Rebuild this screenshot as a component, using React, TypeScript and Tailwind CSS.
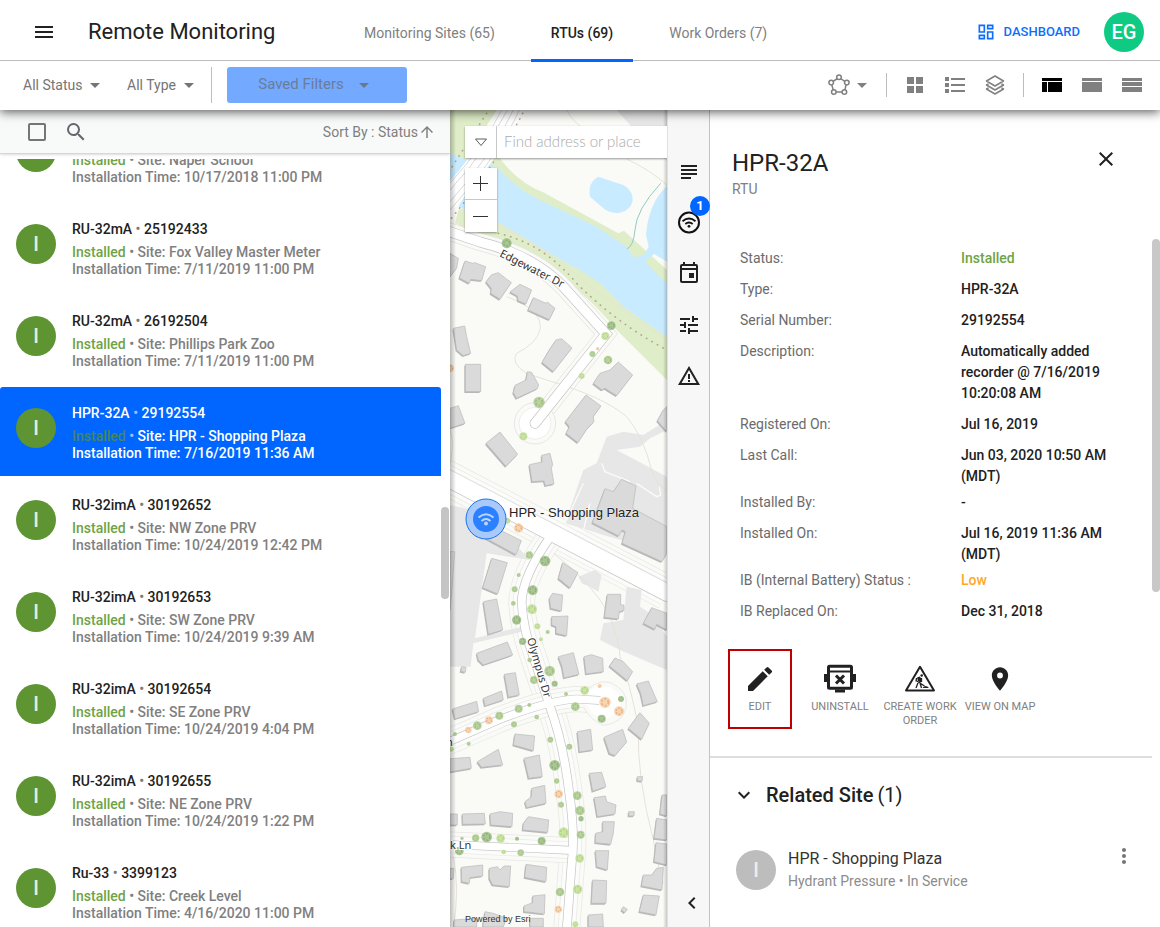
import React, { useState } from "react";
import clsx from "clsx";
import {
  MdArrowDropDown,
  MdArrowUpward,
  MdChevronLeft,
  MdClose,
  MdEdit,
  MdExpandMore,
  MdMenu,
  MdMoreVert,
  MdOutlineDashboard,
  MdPlace,
  MdSearch,
  MdSubject,
  MdTune,
  MdWarningAmber,
} from "react-icons/md";

const tabs = ["Monitoring Sites (65)", "RTUs (69)", "Work Orders (7)"];

const rtus = [
  { model: "RU-32mA", serial: "24192811", site: "Naper School", time: "10/17/2018 11:00 PM" },
  { model: "RU-32mA", serial: "25192433", site: "Fox Valley Master Meter", time: "7/11/2019 11:00 PM" },
  { model: "RU-32mA", serial: "26192504", site: "Phillips Park Zoo", time: "7/11/2019 11:00 PM" },
  { model: "HPR-32A", serial: "29192554", site: "HPR - Shopping Plaza", time: "7/16/2019 11:36 AM" },
  { model: "RU-32imA", serial: "30192652", site: "NW Zone PRV", time: "10/24/2019 12:42 PM" },
  { model: "RU-32imA", serial: "30192653", site: "SW Zone PRV", time: "10/24/2019 9:39 AM" },
  { model: "RU-32imA", serial: "30192654", site: "SE Zone PRV", time: "10/24/2019 4:04 PM" },
  { model: "RU-32imA", serial: "30192655", site: "NE Zone PRV", time: "10/24/2019 1:22 PM" },
  { model: "Ru-33", serial: "3399123", site: "Creek Level", time: "4/16/2020 11:00 PM" },
];

const details = [
  { label: "Status:", value: "Installed", color: "text-[#6fa345]" },
  { label: "Type:", value: "HPR-32A" },
  { label: "Serial Number:", value: "29192554" },
  { label: "Description:", value: "Automatically added recorder @ 7/16/2019 10:20:08 AM" },
  { label: "Registered On:", value: "Jul 16, 2019" },
  { label: "Last Call:", value: "Jun 03, 2020 10:50 AM (MDT)", tight: true },
  { label: "Installed By:", value: "-" },
  { label: "Installed On:", value: "Jul 16, 2019 11:36 AM (MDT)", tight: true },
  { label: "IB (Internal Battery) Status :", value: "Low", color: "text-[#ffa726]" },
  { label: "IB Replaced On:", value: "Dec 31, 2018" },
];

export default function App() {
  return (
    <div className="flex h-screen flex-col overflow-hidden bg-white font-['Roboto',sans-serif] text-sm text-[#212121]">
      <Header />
      <Toolbar />
      <main className="grid min-h-0 flex-1 grid-cols-[minmax(0,450fr)_minmax(0,217fr)_43px_minmax(0,450fr)]">
        <RtuList />
        <SiteMap />
        <Rail />
        <DetailsPanel />
      </main>
    </div>
  );
}

function Header() {
  return (
    <header className="relative z-30 flex h-[61px] shrink-0 border-b border-[#bdbdbd] bg-white">
      <div className="flex w-[344px] shrink-0 items-center pl-8 pt-1">
        <button type="button" aria-label="Menu">
          <MdMenu className="size-6" />
        </button>
        <h1 className="ml-8 text-[22px] font-normal">Remote Monitoring</h1>
      </div>
      <nav className="flex gap-4">
        {tabs.map((tab, i) => (
          <a
            key={tab}
            href="#"
            className={clsx(
              "relative flex items-center whitespace-nowrap px-5 pt-1.5 text-sm",
              i === 1 ? "font-medium text-[#212121]" : "text-[#808080]"
            )}
          >
            {tab}
            {i === 1 && <span className="absolute inset-x-0 top-[59px] h-[3px] bg-[#0066ff]" />}
          </a>
        ))}
      </nav>
      <div className="ml-auto flex items-center gap-6 pr-4 pt-1">
        <a href="#" className="flex items-center gap-2 text-[13px] font-medium text-[#0d6efd]">
          <MdOutlineDashboard className="size-5" />
          DASHBOARD
        </a>
        <button type="button" className="size-10 rounded-full bg-[#0fca83] text-xl font-medium text-white">
          EG
        </button>
      </div>
    </header>
  );
}

function FilterSelect({ label }: { label: string }) {
  return (
    <div className="flex items-center">
      <select aria-label={label} className="appearance-none bg-transparent text-sm text-[#757575]">
        <option>{label}</option>
      </select>
      <MdArrowDropDown className="pointer-events-none size-6 text-[#757575]" />
    </div>
  );
}

function Toolbar() {
  return (
    <div className="relative z-20 flex h-[49px] shrink-0 items-center bg-white pb-0.5 pl-[23px] pr-2 shadow-[0_2px_10px_rgba(0,0,0,0.65)]">
      <div className="flex items-center gap-5">
        <FilterSelect label="All Status" />
        <FilterSelect label="All Type" />
      </div>
      <div className="ml-2.5 mr-[15px] h-9 w-px bg-[#bdbdbd]" />
      <button
        type="button"
        disabled
        className="flex h-9 w-[180px] items-center justify-center gap-2 rounded-[3px] bg-[#73a9ff] text-[15px] text-[#6b7d99]"
      >
        Saved Filters
        <MdArrowDropDown className="size-6 text-[#6b7886]" />
      </button>

      <div className="ml-auto flex items-center text-[#808080]">
        <button type="button" aria-label="Select by shape" className="flex items-center pr-1">
          <svg className="size-[22px]" viewBox="0 0 22 22" fill="white" stroke="currentColor" strokeWidth="1.5">
            <path d="M11 3.5 18.6 8.6 16.4 18H5.8L3.2 8.6Z" />
            <circle cx="11" cy="3.2" r="2.3" />
            <circle cx="18.8" cy="8.6" r="2.3" />
            <circle cx="16.4" cy="18" r="2.3" />
            <circle cx="5.8" cy="18" r="2.3" />
            <circle cx="3.2" cy="8.6" r="2.3" />
          </svg>
          <MdArrowDropDown className="size-6" />
        </button>
        <div className="mx-2 h-6 w-px bg-[#bdbdbd]" />
        <ToolButton label="Grid">
          <svg className="h-4 w-4" viewBox="0 0 16 16" fill="currentColor">
            <path d="M0 0h7v7H0zM9 0h7v7H9zM0 9h7v7H0zM9 9h7v7H9z" />
          </svg>
        </ToolButton>
        <ToolButton label="List">
          <svg className="h-4 w-5" viewBox="0 0 20 16" fill="currentColor">
            <path d="M0 0h4v4H0zM0 6h4v4H0zM0 12h4v4H0zM6 1h14v2H6zM6 7h14v2H6zM6 13h14v2H6z" />
          </svg>
        </ToolButton>
        <ToolButton label="Layers">
          <svg className="size-5" viewBox="0 0 20 20" fill="none" stroke="currentColor" strokeWidth="1.5" strokeLinejoin="round">
            <path d="M10 1 18.5 6 10 11 1.5 6ZM3.5 8.8 1.5 10 10 15 18.5 10 16.5 8.8M3.5 12.8 1.5 14 10 19 18.5 14 16.5 12.8" />
          </svg>
        </ToolButton>
        <div className="mx-2 h-6 w-px bg-[#bdbdbd]" />
        <ToolButton label="Split view" active>
          <svg className="h-3.5 w-5" viewBox="0 0 20 14" fill="currentColor">
            <path d="M0 0h20v3H0zM0 4h5v10H0zM6 4h14v10H6z" />
          </svg>
        </ToolButton>
        <ToolButton label="Map view">
          <svg className="h-3.5 w-5" viewBox="0 0 20 14" fill="currentColor">
            <path d="M0 0h20v3H0zM0 4h20v10H0z" />
          </svg>
        </ToolButton>
        <ToolButton label="Table view">
          <svg className="h-3.5 w-5" viewBox="0 0 20 14" fill="currentColor">
            <path d="M0 0h20v3H0zM0 4h20v4H0zM0 9h20v5H0z" />
          </svg>
        </ToolButton>
      </div>
    </div>
  );
}

function ToolButton({ label, active, children }: { label: string; active?: boolean; children: React.ReactNode }) {
  return (
    <button
      type="button"
      aria-label={label}
      className={clsx("flex size-10 items-center justify-center", active && "text-black")}
    >
      {children}
    </button>
  );
}

function RtuList() {
  const [selected, setSelected] = useState("29192554");

  return (
    <section className="flex min-h-0 flex-col">
      <div className="flex h-11 shrink-0 items-center border-b border-[#d5d8d8] bg-[#f8faf9] pl-7 pr-3.5 text-[#757575] shadow-sm">
        <input
          type="checkbox"
          aria-label="Select all"
          className="size-[18px] appearance-none rounded-[2px] border-2 border-[#757575]"
        />
        <button type="button" aria-label="Search" className="ml-[18px] text-[#66666e]">
          <MdSearch className="size-6" />
        </button>
        <button type="button" className="ml-auto flex items-center text-[#808080]">
          Sort By : Status
          <MdArrowUpward className="size-[18px]" />
        </button>
      </div>
      <div className="mt-[5px] flex min-h-0 flex-1 pr-px">
        <ul className="min-w-0 flex-1 overflow-hidden">
          {rtus.map((rtu) => (
            <RtuRow
              key={rtu.serial}
              rtu={rtu}
              active={rtu.serial === selected}
              onSelect={() => setSelected(rtu.serial)}
            />
          ))}
        </ul>
        <div className="mt-[348px] h-[92px] w-2 rounded-full bg-[#c4c4c4]" />
      </div>
    </section>
  );
}

function RtuRow({
  rtu,
  active,
  onSelect,
}: {
  rtu: { model: string; serial: string; site: string; time: string };
  active: boolean;
  onSelect: () => void;
}) {
  return (
    <li className="mb-[3px] first:-mt-12">
      <button
        type="button"
        onClick={onSelect}
        className={clsx(
          "flex h-[89px] w-full items-start rounded-t-[3px] px-4 pt-4 text-left font-medium",
          active ? "bg-[#0066ff] text-white" : "text-[#808080]"
        )}
      >
        <span className="mt-[5px] flex size-10 shrink-0 items-center justify-center rounded-full bg-[#5e9432] text-xl text-[#e4efdc]">
          I
        </span>
        <span className="ml-4">
          <span className={clsx("mb-[5px] block leading-5", active ? "text-white" : "text-[#212121]")}>
            {rtu.model} <span className="opacity-60">•</span> {rtu.serial}
          </span>
          <span className="block leading-[17px]">
            <span className={active ? "text-[#44875f]" : "text-[#6fa345]"}>Installed</span>{" "}
            <span className={clsx(active && "opacity-60")}>•</span> Site: {rtu.site}
          </span>
          <span className="block leading-[17px]">Installation Time: {rtu.time}</span>
        </span>
      </button>
    </li>
  );
}

// Base map shapes, three units to a screen pixel
const parking = [
  "500,0 651,0 651,50 545,50",
  "345,1240 400,1080 440,1060 470,980 520,965 580,975 651,930 651,960 600,985 570,1010 500,1020 651,1100 651,1330 460,1275 420,1262",
  "0,1185 110,1210 240,1350 110,1330 75,1585 215,1550 215,1565 70,1600 62,1670 0,1670",
  "385,1400 435,1380 455,1395 445,1445 420,1430 395,1420",
  "530,1430 575,1440 570,1490 600,1510 651,1580 651,1680 510,1620 450,1590 460,1540 520,1530",
];

const buildings = [
  // around Edgewater Dr
  "0,430 25,445 20,475 0,500",
  "45,453 68,460 74,458 107,470 95,512 62,508 58,520 28,504",
  "125,494 145,488 184,518 150,568 122,550 124,535 108,515",
  "210,523 245,540 228,582 204,572 202,558 180,546",
  "250,563 288,580 292,576 315,595 298,629 234,600",
  "10,655 44,648 50,680 62,730 40,737 20,720",
  "46,763 92,763 92,845 46,845",
  "318,690 335,686 366,714 310,785 276,757 300,716",
  "232,785 245,787 266,825 262,836 200,865 190,848 195,826 228,810",
  "505,756 548,795 500,857 465,835 456,840 430,820 450,790 480,780",
  "0,895 25,887 45,940 0,955",
  "408,855 453,888 430,920 432,935 410,958 384,998 348,970 358,950 346,935",
  "150,966 203,1033 168,1069 108,1000",
  "275,1036 300,1030 308,1064 304,1075 312,1122 286,1127 282,1113 246,1115 238,1064 276,1056",
  "640,900 651,890 651,965 622,932",
  // plaza
  "515,1108 558,1128 548,1195 651,1250 651,1330 636,1355 516,1300 526,1265 516,1260 506,1278 427,1238 465,1136 490,1145",
  // along the main road
  "118,1250 160,1265 214,1292 198,1334 108,1285",
  "125,1345 172,1358 143,1452 98,1433",
  "100,1475 140,1467 158,1560 115,1573",
  "80,1630 172,1596 188,1635 100,1665 85,1650",
  "0,1325 14,1325 5,1450 0,1500",
  "338,1358 384,1388 360,1434 325,1405",
  "308,1450 338,1455 334,1503 302,1495 298,1465",
  "305,1520 354,1518 350,1577 318,1570 318,1550 305,1545",
  "472,1453 512,1453 512,1485 522,1485 522,1502 508,1505 505,1527 463,1522",
  "605,1493 651,1510 651,1560 620,1543 615,1558 580,1540",
  // around Olympus Dr
  "325,1640 370,1628 387,1693 342,1704 336,1670",
  "402,1640 425,1634 458,1645 460,1685 408,1692",
  "495,1644 520,1655 548,1685 532,1712 478,1668",
  "163,1693 196,1688 208,1755 175,1762",
  "100,1765 155,1743 160,1770 105,1788",
  "8,1797 80,1774 86,1805 15,1827",
  "560,1722 595,1713 622,1775 580,1787 572,1750",
  "570,1808 598,1840 575,1888 535,1855",
  "195,1872 254,1878 250,1922 190,1905",
  "82,1955 145,1918 158,1965 95,1972",
  "0,1946 60,1942 64,1975 0,1986",
  "222,1945 268,1935 277,2000 236,2005",
  "382,1865 422,1858 428,1920 388,1926",
  "462,1882 518,1858 530,1896 495,1937 478,1930",
  "245,2035 284,2026 288,2080 230,2093 225,2075 244,2060",
  "37,2112 103,2110 106,2142 38,2143",
  "120,2112 150,2105 188,2110 186,2150 122,2145",
  "0,2112 22,2112 22,2145 0,2145",
  "235,2120 296,2130 293,2167 218,2160 220,2140",
  "418,1990 455,1987 468,2030 428,2044",
  "432,2063 466,2058 470,2075 498,2085 495,2112 442,2120",
  "458,2135 493,2135 490,2170 482,2203 436,2198 437,2170 458,2165",
  "436,2222 476,2222 472,2280 440,2270",
  "428,2310 470,2312 468,2380 424,2380",
  "34,2272 98,2265 98,2298 60,2303 58,2320 35,2315",
  "118,2275 142,2270 150,2280 162,2268 182,2268 178,2330 128,2325 118,2305",
  "0,2275 12,2275 10,2306 0,2306",
  "228,2263 290,2272 288,2315 224,2302",
  "248,2358 285,2354 283,2412 222,2405 222,2388 248,2378",
  "620,2275 640,2272 636,2340 574,2328 580,2295 605,2295",
  "580,2355 628,2358 618,2415 568,2405",
  "618,2198 651,2202 651,2265 612,2255",
  "620,2125 651,2130 651,2190 612,2185",
  "636,2055 651,2055 651,2118 630,2112",
  "415,2415 458,2412 460,2451 415,2451",
  "105,2405 130,2410 170,2425 160,2451 98,2451",
  "240,2425 280,2425 280,2451 240,2451",
  "12,2430 80,2425 80,2451 12,2451",
  "35,1670 48,1672 46,1687 32,1684",
  "562,2000 578,2000 576,2014 562,2012",
  "536,2105 553,2105 552,2118 536,2118",
  "520,2390 532,2398 524,2408 514,2400",
];

// [x, y, radius, kind]
const trees: [number, number, number, string][] = [
  [170, 400, 15, "dark"], [484, 647, 13, "dark"], [466, 678, 12, "light"], [427, 732, 9, "mid"],
  [474, 750, 13, "mid"], [395, 798, 9, "light"], [443, 716, 5, "orange"], [0, 775, 12, "orange"],
  [267, 877, 17, "mid"], [220, 979, 12, "light"], [172, 1232, 9, "light"], [206, 1254, 14, "orange"],
  [238, 1335, 11, "mid"], [285, 1353, 16, "dark"], [206, 1395, 6, "mid"], [194, 1438, 9, "mid"],
  [248, 1441, 15, "dark"], [190, 1480, 7, "mid"], [246, 1498, 15, "light"], [200, 1530, 14, "dark"],
  [262, 1549, 9, "light"], [293, 1566, 6, "mid"], [218, 1594, 11, "dark"], [273, 1588, 6, "light"],
  [239, 1650, 7, "mid"], [299, 1683, 16, "mid"], [252, 1710, 12, "mid"], [314, 1721, 9, "dark"],
  [348, 1752, 6, "mid"], [404, 1741, 13, "light"], [449, 1728, 6, "orange"], [376, 1790, 13, "mid"],
  [465, 1777, 17, "orange"], [507, 1804, 15, "orange"], [513, 1767, 9, "dark"], [455, 1826, 12, "dark"],
  [206, 1796, 12, "mid"], [238, 1785, 6, "mid"], [260, 1821, 7, "mid"], [148, 1817, 12, "mid"],
  [117, 1831, 12, "orange"], [82, 1847, 13, "mid"], [55, 1860, 10, "orange"], [192, 1843, 9, "mid"],
  [15, 1872, 6, "mid"], [56, 1901, 6, "mid"], [5, 1918, 7, "light"], [301, 1889, 9, "mid"],
  [358, 1910, 9, "mid"], [314, 1966, 16, "dark"], [320, 2013, 8, "mid"], [326, 2052, 13, "orange"],
  [382, 2057, 13, "mid"], [333, 2084, 9, "mid"], [390, 2102, 14, "mid"], [393, 2126, 8, "dark"],
  [341, 2168, 16, "light"], [392, 2174, 12, "mid"], [77, 2184, 11, "mid"], [110, 2181, 16, "dark"],
  [152, 2185, 13, "light"], [201, 2186, 6, "dark"], [275, 2193, 12, "dark"], [36, 2185, 5, "mid"],
  [28, 2223, 13, "dark"], [161, 2226, 7, "light"], [212, 2228, 10, "mid"], [389, 2245, 13, "light"],
  [383, 2338, 14, "light"], [330, 2346, 13, "mid"], [325, 2398, 11, "orange"], [376, 2443, 9, "light"],
];

const roads = [
  { d: "M-10 362 90 396Q250 436 340 530L468 672L255 940", width: 28 },
  { d: "M-20 1098 651 1448", width: 50 },
  { d: "M305 1275 Q215 1400 215 1480 Q220 1560 250 1640 L300 1790 Q340 1900 358 2050 Q376 2180 365 2260L350 2460", width: 24 },
  { d: "M-10 1898 150 1828 Q300 1770 380 1767 L460 1772", width: 22 },
  { d: "M-10 2203 365 2221", width: 22 },
];

function SiteMap() {
  return (
    <section className="relative min-w-0 overflow-hidden bg-[#fafbf7]">
      <svg className="absolute inset-0 size-full" viewBox="0 0 217 817" preserveAspectRatio="xMinYMin slice">
        <g transform="scale(0.33333)">
          <path
            d="M0 0H140L40 155 0 130ZM120 130 150 145Q200 215 285 250L505 370 522 362 651 480V810L500 660Q400 540 300 480 180 400 100 385L15 340 25 300 80 280Z"
            fill="#dfedc8"
          />
          <path
            d="M0 130 50 150 0 235ZM105 155 145 175Q200 240 290 280L440 350 480 378 530 410 550 442 580 437 596 410 588 375Q595 280 651 228V455L612 432 585 455 651 520V680L520 590 450 520 390 480 300 430 210 375 150 340 25 290 60 230Z"
            fill="#c9ebff"
          />
          <path d="M445 200 520 225Q550 242 548 272 543 300 510 308 480 312 460 295L420 260Q412 218 445 200Z" fill="#c9ebff" />
          <path d="M632 220Q558 300 555 360 550 410 530 417" fill="none" stroke="#8fcbc2" strokeWidth="3" />
          {roads.slice(1).map((road) => (
            <g key={road.d} fill="none">
              <path d={road.d} stroke="#e6e6e4" strokeWidth={road.width + 56} />
              <path d={road.d} stroke="#fafbf7" strokeWidth={road.width + 52} />
              <path d={road.d} stroke="#e8e8e6" strokeWidth={road.width + 30} />
              <path d={road.d} stroke="#fcfcfa" strokeWidth={road.width + 26} />
            </g>
          ))}
          <path d={roads[0].d} fill="none" stroke="#e4e4e2" strokeWidth="54" />
          <path d={roads[0].d} fill="none" stroke="#fafbf7" strokeWidth="50" />
          {parking.map((points) => (
            <polygon key={points} points={points} fill="#e7e7e7" />
          ))}
          <g fill="none" stroke="#e6e2d8" strokeWidth="3">
            <path d="M145 345Q300 420 420 530L651 690M350 0Q370 40 410 60M530 147Q600 180 651 225" />
            <path d="M170 560Q280 600 270 660 260 700 200 730 180 760 230 790L290 810Q460 860 530 920 580 980 605 1080 620 1130 651 1140" />
            <path d="M310 1330Q430 1420 480 1520 510 1600 510 1640 540 1720 565 1850 560 2000 610 2190 630 2300 640 2320M0 960Q15 1000 0 1060M10 2240Q30 2340 10 2451" />
          </g>
          <path d="M455 1060 465 1085 540 1115M560 1120 620 1160 632 1155 628 1130M345 1240 400 1120M400 1262 420 1180" fill="none" stroke="#fafbf7" strokeWidth="4" />
          <path d="M190-10Q140 100-10 275" fill="none" stroke="#ffffff" strokeWidth="62" />
          <path
            d="M155 0Q100 110 0 220M172 0Q110 120 0 240M190 0Q130 130 0 275M208 0Q150 130 0 300"
            fill="none"
            stroke="#c6c6c6"
            strokeWidth="2"
          />
          <path
            d="M110 10 0 180M218 10Q140 160 0 330M145 370Q280 400 380 520 500 640 651 720"
            fill="none"
            stroke="#b5a58e"
            strokeWidth="5"
            strokeDasharray="1 18"
            strokeLinecap="round"
          />
          <circle cx="255" cy="940" r="62" fill="#fafbf7" stroke="#dddddd" strokeWidth="2" />
          <circle cx="255" cy="940" r="48" fill="#ffffff" stroke="#e6e6e6" strokeWidth="2" />
          <path d="M390 1767Q430 1705 480 1717 535 1740 529 1790 520 1840 460 1846 420 1830 400 1790" fill="#fafbf7" stroke="#e0e0e0" strokeWidth="2" />
          <path d="M390 1767Q430 1720 480 1732 515 1750 512 1785 500 1820 460 1826 430 1820 410 1785" fill="#ffffff" />
          {roads.map((road) => (
            <path key={road.d} d={road.d} fill="none" stroke="#c4c4c4" strokeWidth={road.width + 4} strokeLinecap="round" />
          ))}
          {roads.map((road) => (
            <path key={road.d} d={road.d} fill="none" stroke="#ffffff" strokeWidth={road.width} strokeLinecap="round" />
          ))}
          <circle cx="472" cy="1775" r="26" fill="#ffffff" />
          <path d="M0 1078 651 1417" stroke="#ececec" strokeWidth="3" />
          {buildings.map((points) => (
            <g key={points}>
              <polygon points={points} fill="#b8b8b8" transform="translate(-3 4)" />
              <polygon points={points} fill="#dadada" stroke="#b8b8b8" strokeWidth="2" />
            </g>
          ))}
          {trees.map(([x, y, r, kind]) => (
            <Tree key={`${x}-${y}`} x={x} y={y} r={r} kind={kind} />
          ))}
        </g>
        <g fontFamily="'Noto Sans', sans-serif" fontSize="11" fill="#333333" stroke="#ffffff" strokeWidth="2" paintOrder="stroke">
          <text x="49" y="146" transform="rotate(27 49 146)">Edgewater Dr</text>
          <text x="77" y="529" transform="rotate(74 77 529)">Olympus Dr</text>
          <text x="0" y="739">k Ln</text>
          <text x="-4" y="636">n</text>
        </g>
        <g transform="translate(36 409)">
          <circle r="20" fill="#a9c9fb" stroke="#1a73f0" />
          <circle r="13" fill="#2a80ff" />
          <g fill="none" stroke="#bcd6fb" strokeWidth="2">
            <path d="M-7.5-1.5Q0-8 7.5-1.5M-4.5 2Q0-2 4.5 2" />
            <circle cy="4.500" r="1" fill="#bcd6fb" />
          </g>
        </g>
        <text
          x="59"
          y="407"
          fontFamily="'Liberation Sans', sans-serif"
          fontSize="13"
          fill="#222222"
          stroke="#ffffff"
          strokeOpacity="0.5"
          strokeWidth="1"
          paintOrder="stroke"
        >
          HPR - Shopping Plaza
        </text>
      </svg>
      <div className="pointer-events-none absolute inset-y-0 left-0 w-1.5 bg-gradient-to-r from-black/25 to-transparent" />
      <div className="pointer-events-none absolute inset-y-0 right-0 w-1 bg-gradient-to-l from-black/20 to-transparent" />

      <div className="absolute left-[15px] right-0 top-4 flex h-8 bg-white shadow-[0_1px_2px_rgba(0,0,0,0.4)]">
        <button
          type="button"
          aria-label="Search source"
          className="flex w-8 shrink-0 items-center justify-center border-r border-[#c8c8c8]"
        >
          <svg className="h-2 w-3" viewBox="0 0 12 8" fill="none" stroke="#5c5c5c">
            <path d="M.5 1h11L6 7.500Z" />
          </svg>
        </button>
        <input
          type="text"
          aria-label="Find address or place"
          placeholder="Find address or place"
          className="min-w-0 flex-1 px-[7px] font-['Lato',sans-serif] text-[15px] font-light placeholder:text-[#a9a9a9]"
        />
      </div>
      <div className="absolute left-[15px] top-[58px] flex w-8 flex-col divide-y divide-[#c8c8c8] bg-white shadow-[0_1px_2px_rgba(0,0,0,0.4)]">
        <button type="button" aria-label="Zoom in" className="flex h-8 items-center justify-center">
          <svg className="size-4" viewBox="0 0 16 16" stroke="#323232">
            <path d="M7.5 0v15M0 7.5h15" />
          </svg>
        </button>
        <button type="button" aria-label="Zoom out" className="flex h-8 items-center justify-center">
          <svg className="size-4" viewBox="0 0 16 16" stroke="#323232">
            <path d="M0 8.5h15" />
          </svg>
        </button>
      </div>
      <span className="absolute bottom-0 left-[15px] font-['Liberation_Sans',sans-serif] text-[9px] leading-4 text-[#323232]">
        Powered by Esri
      </span>
    </section>
  );
}

function Tree({ x, y, r, kind }: { x: number; y: number; r: number; kind: string }) {
  const color = { dark: "#9dbd84", mid: "#aecb90", light: "#c4e09a", orange: "#f6cfa8" }[kind];
  const inner = { dark: "#7ba463", mid: "#8fb56e", light: "#a3cc6a", orange: "#e9a36b" }[kind];
  return (
    <g opacity="0.85">
      <circle cx={x} cy={y} r={r} fill={color} />
      <circle cx={x} cy={y} r={r * 0.6} fill="none" stroke={inner} strokeWidth={r * 0.3} strokeDasharray={`${r * 0.35} ${r * 0.3}`} />
    </g>
  );
}

function Rail() {
  return (
    <aside className="z-10 flex flex-col items-center border-l border-r border-l-[#e0e0e0] border-r-[#c4c4c4] bg-[#f7f7f7] pt-9">
      <RailButton label="Details">
        <MdSubject className="size-6" />
      </RailButton>
      <RailButton label="Devices">
        <svg className="size-6" viewBox="0 0 24 24" fill="none" stroke="#111111" strokeWidth="2">
          <circle cx="12" cy="11.500" r="10" />
          <path d="M5.500 10.200Q12 4.800 18.500 10.200M8.300 13Q12 10 15.700 13" strokeWidth="1.800" />
          <circle cx="12" cy="15.300" r="1.400" fill="#111111" stroke="none" />
        </svg>
        <span className="absolute -top-px left-[22px] flex size-5 items-center justify-center rounded-full bg-[#0066ff] text-[13px] font-bold text-white">
          1
        </span>
      </RailButton>
      <RailButton label="Events">
        <svg className="size-6" viewBox="0 0 24 24" fill="none" stroke="currentColor" strokeWidth="2">
          <rect x="4" y="3" width="16" height="17" rx="1" />
          <path d="M4 7h16M7 0v3M17 0v3" />
          <path d="M12 11h5v5h-5z" fill="currentColor" stroke="none" />
        </svg>
      </RailButton>
      <RailButton label="Settings">
        <MdTune className="size-6" />
      </RailButton>
      <RailButton label="Alerts">
        <MdWarningAmber className="size-6" />
      </RailButton>
      <button type="button" aria-label="Collapse panel" className="mb-3 ml-1.5 mt-auto">
        <MdChevronLeft className="size-6" />
      </button>
    </aside>
  );
}

function RailButton({ label, children }: { label: string; children: React.ReactNode }) {
  return (
    <button type="button" aria-label={label} className="relative flex h-[51px] w-full shrink-0 items-center justify-center">
      {children}
    </button>
  );
}

function DetailsPanel() {
  return (
    <section className="flex min-h-0 min-w-0 flex-col bg-white">
      <div className="flex h-[129px] shrink-0 items-start justify-between pl-[22px] pr-[42px] pt-[37px]">
        <div>
          <h2 className="text-2xl font-normal">HPR-32A</h2>
          <p className="leading-5 text-[#808080]">RTU</p>
        </div>
        <button type="button" aria-label="Close">
          <MdClose className="size-6" />
        </button>
      </div>
      <div className="flex min-h-0 flex-1">
        <div className="min-w-0 flex-1 overflow-hidden">
          <dl className="pl-[30px] pr-8 pt-[9px]">
            {details.map((row) => (
              <div
                key={row.label}
                className={clsx("grid grid-cols-[221fr_159fr] leading-[21px]", row.tight ? "pb-[5px]" : "pb-2.5")}
              >
                <dt className="leading-5 text-[#6b6b6b]">{row.label}</dt>
                <dd className={clsx("font-medium", row.color)}>{row.value}</dd>
              </div>
            ))}
          </dl>
          <Actions />
          <RelatedSite />
        </div>
        <div className="h-[353px] w-2 shrink-0 rounded-full bg-[#c8c8c8]" />
      </div>
    </section>
  );
}

function Actions() {
  return (
    <div className="mt-[17px] flex h-[109px] items-start border-b-2 border-[#dedede] pl-2.5">
      <div className="flex w-20 justify-center">
        <ActionButton label="EDIT" className="h-20 w-16 border-2 border-[#c00000] pt-3">
          <MdEdit className="size-8" />
        </ActionButton>
      </div>
      <ActionButton label="UNINSTALL" className="w-20 pt-3.5">
        <svg className="size-8" viewBox="0 0 32 32" fill="none" stroke="#212121">
          <rect x="4.500" y="3.200" width="23" height="22" rx="1" strokeWidth="3" />
          <path d="M5 8.500h22" strokeWidth="2" />
          <path d="M1.500 11v8M30.500 11v8" strokeWidth="3" />
          <path d="M11 28h10" strokeWidth="3" />
          <path d="M12 12.500 20 20.500M20 12.500 12 20.500" strokeWidth="3" />
        </svg>
      </ActionButton>
      <ActionButton label="CREATE WORK ORDER" className="w-20 pt-3.5">
        <svg className="size-8" viewBox="0 0 32 32" fill="none" stroke="#212121" strokeLinejoin="round">
          <path d="M16 3.800 30 27.500H2Z" strokeWidth="2" />
          <circle cx="17.700" cy="12.500" r="1.300" fill="#212121" stroke="none" />
          <path d="M13 14.500 15.500 13.500 18 16 17 19.500 14 18Z" fill="#212121" stroke="none" />
          <path d="M14.500 18.500 12 25M15.500 18.500 17.500 25M12.500 15 12 18.500M17.500 15 17.500 19M12 17.500 20.500 23" strokeWidth="1.300" />
          <path d="M18.500 25Q21.500 21 25 25Z" fill="#212121" stroke="none" />
        </svg>
      </ActionButton>
      <ActionButton label="VIEW ON MAP" className="w-20 pt-3.5">
        <MdPlace className="size-7" />
      </ActionButton>
    </div>
  );
}

function ActionButton({ label, className, children }: { label: string; className: string; children: React.ReactNode }) {
  return (
    <button type="button" className={clsx("flex flex-col items-center", className)}>
      <span className="flex size-8 items-center justify-center">{children}</span>
      <span className="mt-[5px] text-[11px] leading-[14px] text-[#808080]">{label}</span>
    </button>
  );
}

function RelatedSite() {
  return (
    <div className="pl-[26px]">
      <h3 className="flex items-center pt-[23px] text-xl">
        <button type="button" aria-label="Toggle related site" className="-ml-1 mr-2.5">
          <MdExpandMore className="size-6" />
        </button>
        <span className="font-medium">Related Site</span>
        <span className="ml-1">(1)</span>
      </h3>
      <div className="flex items-start pr-4 pt-[35px]">
        <span className="mt-1.5 flex size-10 shrink-0 items-center justify-center rounded-full bg-[#bdbdbd] text-xl font-medium text-[#ededed]">
          I
        </span>
        <div className="ml-3 mt-1">
          <p className="text-base leading-[22px] text-[#333333]">HPR - Shopping Plaza</p>
          <p className="leading-[22px] text-[#8c8c8c]">Hydrant Pressure • In Service</p>
        </div>
        <button type="button" aria-label="More options" className="ml-auto text-[#757575]">
          <MdMoreVert className="size-6" />
        </button>
      </div>
    </div>
  );
}
